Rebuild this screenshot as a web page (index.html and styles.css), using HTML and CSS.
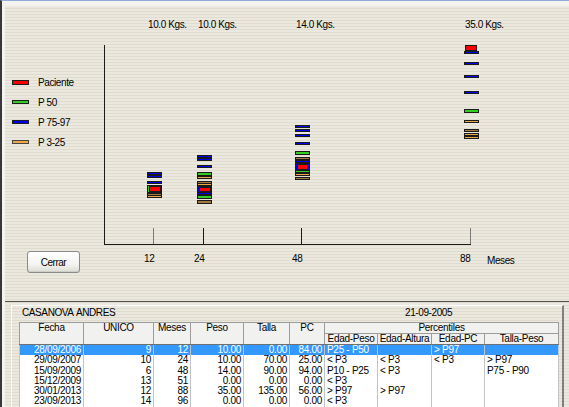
FILE: index.html
```html
<!DOCTYPE html>
<html lang="es">
<head>
  <meta charset="UTF-8">
  <title>Percentiles</title>
  <link rel="stylesheet" href="styles.css">
</head>
<body>
  <div class="window">
    <div class="frame">
      <div class="chart-panel">
        <div class="side">
          <ul class="legend">
            <li><span class="swatch swatch-red"></span>Paciente</li>
            <li><span class="swatch swatch-green"></span>P 50</li>
            <li><span class="swatch swatch-blue"></span>P 75-97</li>
            <li><span class="swatch swatch-orange"></span>P 3-25</li>
          </ul>
          <button class="btn">Cerrar</button>
        </div>

        <svg class="chart" viewBox="100 6 465 295" width="465" height="295">
          <!-- weights -->
          <text x="148" y="28">10.0 Kgs.</text>
          <text x="198" y="28">10.0 Kgs.</text>
          <text x="296" y="28">14.0 Kgs.</text>
          <text x="465" y="28">35.0 Kgs.</text>

          <!-- axes -->
          <line class="axis" x1="104.5" y1="45" x2="104.5" y2="245"/>
          <line class="axis" x1="104" y1="244.5" x2="471" y2="244.5"/>
          <line class="tick light" x1="153.5" y1="228" x2="153.5" y2="244"/>
          <line class="tick" x1="203.5" y1="228" x2="203.5" y2="244"/>
          <line class="tick" x1="301.5" y1="228" x2="301.5" y2="244"/>
          <line class="tick light" x1="470.5" y1="228" x2="470.5" y2="244"/>

          <text x="144" y="262">12</text>
          <text x="194" y="262">24</text>
          <text x="292" y="262">48</text>
          <text x="460" y="262">88</text>
          <text x="487" y="264">Meses</text>

          <!-- 12 meses -->
          <rect class="m blue" x="147.5" y="172.5" width="14" height="2"/>
          <rect class="m blue" x="147.5" y="175.5" width="14" height="2"/>
          <rect class="m blue" x="147.5" y="181.5" width="14" height="2"/>
          <rect class="m green" x="147.5" y="185.5" width="14" height="7"/>
          <rect class="m red" x="149.5" y="186.5" width="11" height="5"/>
          <rect class="m brown" x="147.5" y="193.5" width="14" height="2"/>
          <rect class="m tan" x="147.5" y="195.5" width="14" height="2"/>

          <!-- 24 meses -->
          <rect class="m blue" x="197.5" y="155.5" width="14" height="2"/>
          <rect class="m blue" x="197.5" y="158.5" width="14" height="2"/>
          <rect class="m blue" x="197.5" y="165.5" width="14" height="2"/>
          <rect class="m green" x="197.5" y="172.5" width="14" height="3"/>
          <rect class="m tan" x="197.5" y="176.5" width="14" height="2"/>
          <rect class="m brown" x="197.5" y="181.5" width="14" height="2"/>
          <rect class="m tan" x="197.5" y="183.5" width="14" height="2"/>
          <rect class="m blue" x="197.5" y="186.5" width="14" height="6"/>
          <rect class="m red" x="199.5" y="187.5" width="11" height="4"/>
          <rect class="m blue" x="197.5" y="192.5" width="14" height="2"/>
          <rect class="m green" x="197.5" y="195.5" width="14" height="3"/>
          <rect class="m brown" x="197.5" y="200.5" width="14" height="3"/>

          <!-- 48 meses -->
          <rect class="m blue" x="295.5" y="125.5" width="14" height="2"/>
          <rect class="m blue" x="295.5" y="129.5" width="14" height="2"/>
          <rect class="m blue" x="295.5" y="134.5" width="14" height="2"/>
          <rect class="m blue" x="295.5" y="142.5" width="14" height="2"/>
          <rect class="m green" x="295.5" y="151.5" width="14" height="3"/>
          <rect class="m brown" x="295.5" y="157.5" width="14" height="2"/>
          <rect class="m blue" x="295.5" y="160.5" width="14" height="2"/>
          <rect class="m blue" x="295.5" y="163.5" width="14" height="7"/>
          <rect class="m red" x="297.5" y="164.5" width="10" height="5"/>
          <rect class="m green" x="295.5" y="170.5" width="14" height="2"/>
          <rect class="m tan" x="295.5" y="173.5" width="14" height="2"/>
          <rect class="m brown" x="295.5" y="177.5" width="14" height="2"/>

          <!-- 88 meses -->
          <rect class="m red" x="465.5" y="45.5" width="11" height="5"/>
          <rect class="m blue" x="464.5" y="51.5" width="14" height="2"/>
          <rect class="m blue" x="464.5" y="62.5" width="14" height="2"/>
          <rect class="m blue" x="464.5" y="75.5" width="14" height="2"/>
          <rect class="m blue" x="464.5" y="91.5" width="14" height="2"/>
          <rect class="m green" x="464.5" y="109.5" width="14" height="3"/>
          <rect class="m tan" x="464.5" y="120.5" width="14" height="2"/>
          <rect class="m brown" x="464.5" y="129.5" width="14" height="2"/>
          <rect class="m tan" x="464.5" y="133.5" width="14" height="2"/>
          <rect class="m tan" x="464.5" y="136.5" width="14" height="2"/>
        </svg>
      </div>

      <div class="records">
        <div class="group">
          <div class="group-head">
            <span class="patient">CASANOVA ANDRES</span>
            <span class="date">21-09-2005</span>
          </div>
          <table class="grid">
            <colgroup>
              <col class="w-fecha"><col class="w-unico"><col class="w-meses"><col class="w-peso"><col class="w-talla">
              <col class="w-pc"><col class="w-ep"><col class="w-ea"><col class="w-epc"><col class="w-tp">
            </colgroup>
            <thead>
              <tr>
                <th rowspan="2">Fecha</th>
                <th rowspan="2">UNICO</th>
                <th rowspan="2">Meses</th>
                <th rowspan="2">Peso</th>
                <th rowspan="2">Talla</th>
                <th rowspan="2">PC</th>
                <th colspan="4">Percentiles</th>
              </tr>
              <tr>
                <th>Edad-Peso</th>
                <th>Edad-Altura</th>
                <th>Edad-PC</th>
                <th>Talla-Peso</th>
              </tr>
            </thead>
            <tbody>
              <tr class="selected">
                <td class="num">28/09/2006</td><td class="num">9</td><td class="num">12</td><td class="num">10.00</td><td class="num">0.00</td>
                <td class="num">84.00</td><td>P25 - P50</td><td></td><td>&gt; P97</td><td></td>
              </tr>
              <tr>
                <td class="num">29/09/2007</td><td class="num">10</td><td class="num">24</td><td class="num">10.00</td><td class="num">70.00</td>
                <td class="num">25.00</td><td>&lt; P3</td><td>&lt; P3</td><td>&lt; P3</td><td>&gt; P97</td>
              </tr>
              <tr>
                <td class="num">15/09/2009</td><td class="num">6</td><td class="num">48</td><td class="num">14.00</td><td class="num">90.00</td>
                <td class="num">94.00</td><td>P10 - P25</td><td>&lt; P3</td><td></td><td>P75 - P90</td>
              </tr>
              <tr>
                <td class="num">15/12/2009</td><td class="num">13</td><td class="num">51</td><td class="num">0.00</td><td class="num">0.00</td>
                <td class="num">0.00</td><td>&lt; P3</td><td></td><td></td><td></td>
              </tr>
              <tr>
                <td class="num">30/01/2013</td><td class="num">12</td><td class="num">88</td><td class="num">35.00</td><td class="num">135.00</td>
                <td class="num">56.00</td><td>&gt; P97</td><td>&gt; P97</td><td></td><td></td>
              </tr>
              <tr>
                <td class="num">23/09/2013</td><td class="num">14</td><td class="num">96</td><td class="num">0.00</td><td class="num">0.00</td>
                <td class="num">0.00</td><td>&lt; P3</td><td></td><td></td><td></td>
              </tr>
            </tbody>
          </table>
        </div>
      </div>
    </div>
  </div>
</body>
</html>
```

FILE: styles.css
```css
body {
  margin: 0;
  width: 569px;
  height: 407px;
  overflow: hidden;
  font-family: "Liberation Sans", Arial, sans-serif;
  font-size: 10px;
  color: #000;
  background-color: #f3f2ee;
}

.window {
  height: 407px;
  box-sizing: border-box;
  border-top: 1px solid #8eacdc;
  border-left: 2px solid #383838;
}

.frame {
  height: 100%;
  box-sizing: border-box;
  border-top: 5px solid #f4f3ef;
  border-left: 3px solid #f4f3ef;
  background: repeating-linear-gradient(to bottom, #ebe9df 0, #ebe9df 2px, #dfdcce 2px, #dfdcce 3px);
}

.chart-panel {
  display: grid;
  grid-template-columns: 95px 465px;
  height: 295px;
}

.side {
  display: flex;
  flex-direction: column;
  align-items: flex-start;
}

.legend {
  list-style: none;
  margin: 0;
  padding: 66px 0 0;
}

.legend li {
  display: flex;
  align-items: center;
  height: 20px;
  letter-spacing: -0.4px;
}

.swatch {
  width: 15px;
  height: 2px;
  margin: 0 9px 0 7px;
  border: 1px solid #1c1c1c;
  box-sizing: content-box;
}

.swatch-red {
  height: 3px;
  background-color: #ff0000;
}

.swatch-green {
  background-color: #33cc22;
}

.swatch-blue {
  background-color: #0000f0;
}

.swatch-orange {
  background-color: #f2a640;
  border-color: #444;
}

.btn {
  width: 53px;
  height: 22px;
  margin: 99px 0 0 22px;
  padding: 0;
  font-family: "Liberation Sans", Arial, sans-serif;
  font-size: 10px;
  letter-spacing: -0.5px;
  color: #000;
  border: 1px solid #8a8a8a;
  border-radius: 3px;
  background: linear-gradient(to bottom, #ffffff 0%, #f4f4f2 60%, #dcdcd6 100%);
  box-shadow: inset 0 -1px 0 #cfcfc8;
}

.chart {
  display: block;
  shape-rendering: crispEdges;
}

.chart text {
  font-family: "Liberation Sans", Arial, sans-serif;
  font-size: 10px;
  letter-spacing: -0.4px;
  fill: #000;
  shape-rendering: auto;
}

.axis {
  stroke: #1a1a1a;
  stroke-width: 1;
}

.tick {
  stroke: #1a1a1a;
  stroke-width: 1;
}

.tick.light {
  stroke: #7a7a7a;
}

.m {
  stroke: #1a1a1a;
  stroke-width: 1;
}

.m.red {
  fill: #ff0000;
}

.m.blue {
  fill: #0000e8;
}

.m.green {
  fill: #33cc22;
}

.m.tan {
  fill: #e8a848;
}

.m.brown {
  fill: #a07840;
}

.records {
  border-top: 1px solid #505050;
  padding: 3px 0 0 6px;
}

.group {
  width: 553px;
  height: 120px;
  box-sizing: border-box;
  border-top: 1px solid #ffffff;
  border-left: 1px solid #ffffff;
  border-right: 2px solid #808080;
  padding-left: 7px;
}

.group-head {
  display: flex;
  height: 14px;
  line-height: 14px;
  padding: 0 0 2px 3px;
  letter-spacing: -0.4px;
  word-spacing: 1px;
}

.patient {
  width: 383px;
}

.grid {
  width: 539px;
  table-layout: fixed;
  border-collapse: collapse;
  background-color: #ffffff;
  letter-spacing: -0.3px;
}

.w-fecha { width: 64px; }
.w-unico { width: 70px; }
.w-meses { width: 37px; }
.w-peso { width: 53px; }
.w-talla { width: 46px; }
.w-pc { width: 35px; }
.w-ep { width: 53px; }
.w-ea { width: 54px; }
.w-epc { width: 53px; }
.w-tp { width: 74px; }

.grid th {
  height: 10px;
  padding: 0;
  line-height: 10px;
  font-weight: normal;
  text-align: center;
  vertical-align: top;
  background-color: #f1f1ef;
  border: 1px solid #9c9c9c;
}

.grid thead tr:last-child th,
.grid th[rowspan] {
  border-bottom: 1px solid #707070;
}

.grid td {
  height: 10.3px;
  padding: 0 2px;
  line-height: 10.3px;
  white-space: nowrap;
  overflow: hidden;
  border-left: 1px solid #c4c4c4;
  border-right: 1px solid #c4c4c4;
}

.grid td.num {
  text-align: right;
}

.grid tr.selected td {
  background-color: #3399ff;
  color: #ffffff;
}
```
